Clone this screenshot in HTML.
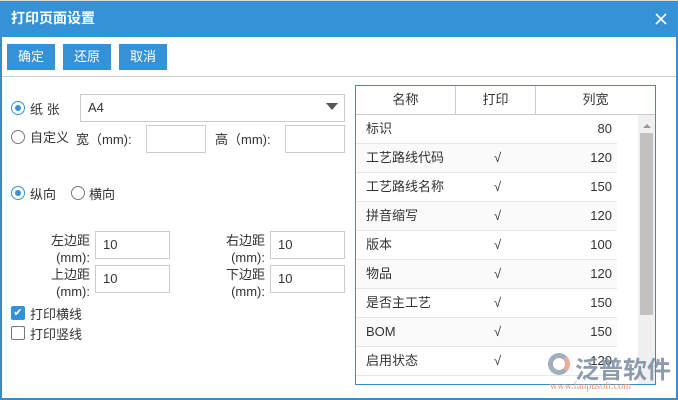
<!DOCTYPE html>
<html><head><meta charset="utf-8"><style>
*{margin:0;padding:0;box-sizing:border-box}
body{width:678px;height:400px;overflow:hidden;background:#fff;font-family:"Liberation Sans","Noto Sans CJK SC",sans-serif;font-size:13px;color:#333;position:relative}
.frame{position:absolute;left:0;top:1px;width:678px;height:399px;border:2px solid #3a8bc8;border-top:none}
.title{position:absolute;left:0;top:1px;width:678px;height:36px;background:#3592d6;color:#fff;font-weight:bold;font-size:14px;line-height:34px;padding-left:11px}
.btn{position:absolute;top:44px;width:48px;height:26px;background:#3592d6;color:#fff;font-size:13px;text-align:center;line-height:26px}
.sep{position:absolute;left:2px;right:2px;top:76px;border-top:1px solid #ccc}
.a{position:absolute;white-space:nowrap}
.radio{position:absolute;width:14px;height:14px;border:1px solid #777;border-radius:50%}
.radio.on{border-color:#3592d6}
.radio.on::after{content:"";position:absolute;left:3px;top:3px;width:6px;height:6px;border-radius:50%;background:#3592d6}
.inp{position:absolute;border:1px solid #ccc;background:#fff;padding-left:7px;line-height:26px}
.lbl{position:absolute;text-align:right;line-height:17px;font-size:13px}
.tbl{position:absolute;left:355px;top:85px;width:301px;height:300px;border:1px solid #3a8bc8;overflow:hidden}
.hdr{position:absolute;left:0;top:0;height:29px;width:299px;border-bottom:1px solid #ccc}
.hdr div{position:absolute;top:0;height:28px;line-height:28px;text-align:center;border-right:1px solid #ccc}
.row{position:absolute;left:0;width:261px;height:29px;border-bottom:1px solid #e6e6e6;line-height:28px}
.row span{position:absolute}
</style></head><body>
<div style="position:absolute;left:0;top:0;width:678px;height:2px;background:#ddd"></div>
<div class="frame"></div>
<div class="title">打印页面设置</div>
<svg style="position:absolute;left:655px;top:13px" width="12" height="12" viewBox="0 0 12 12"><path d="M1 1L11 11M11 1L1 11" stroke="#fff" stroke-width="1.6"/></svg>
<div class="btn" style="left:7px">确定</div>
<div class="btn" style="left:63px">还原</div>
<div class="btn" style="left:119px">取消</div>
<div class="sep"></div>

<div class="radio on" style="left:11px;top:101px"></div>
<div class="a" style="left:30px;top:99px">纸 张</div>
<div class="inp" style="left:80px;top:94px;width:265px;height:28px">A4</div>
<div class="a" style="left:326px;top:103px;width:0;height:0;border-left:6px solid transparent;border-right:6px solid transparent;border-top:7px solid #555"></div>
<div class="radio" style="left:11px;top:130px"></div>
<div class="a" style="left:30px;top:127px">自定义</div>
<div class="a" style="left:76px;top:129px">宽（mm):</div>
<div class="inp" style="left:146px;top:125px;width:60px;height:28px"></div>
<div class="a" style="left:215px;top:129px">高（mm):</div>
<div class="inp" style="left:285px;top:125px;width:60px;height:28px"></div>

<div class="radio on" style="left:11px;top:186px"></div>
<div class="a" style="left:30px;top:184px">纵向</div>
<div class="radio" style="left:71px;top:186px"></div>
<div class="a" style="left:89px;top:184px">横向</div>

<div class="lbl" style="left:30px;top:232px;width:60px">左边距<br>(mm):</div>
<div class="inp" style="left:95px;top:231px;width:75px;height:28px">10</div>
<div class="lbl" style="left:205px;top:232px;width:60px">右边距<br>(mm):</div>
<div class="inp" style="left:270px;top:231px;width:75px;height:28px">10</div>
<div class="lbl" style="left:30px;top:266px;width:60px">上边距<br>(mm):</div>
<div class="inp" style="left:95px;top:265px;width:75px;height:28px">10</div>
<div class="lbl" style="left:205px;top:266px;width:60px">下边距<br>(mm):</div>
<div class="inp" style="left:270px;top:265px;width:75px;height:28px">10</div>

<div class="a" style="left:11px;top:306px;width:14px;height:14px;background:#3592d6;border-radius:2px;color:#fff;font-size:11px;line-height:14px;text-align:center">✔</div>
<div class="a" style="left:30px;top:304px">打印横线</div>
<div class="a" style="left:11px;top:326px;width:14px;height:14px;border:1px solid #777;border-radius:2px"></div>
<div class="a" style="left:30px;top:324px">打印竖线</div>

<div class="tbl">
<div class="hdr"><div style="left:0;width:100px">名称</div><div style="left:100px;width:80px">打印</div><div style="left:180px;width:119px;border-right:none">列宽</div></div>
<div class="row" style="top:29px"><span style="left:10px">标识</span><span style="right:5px">80</span></div>
<div class="row" style="top:58px;background:#fafafa"><span style="left:10px">工艺路线代码</span><span style="left:138px">√</span><span style="right:5px">120</span></div>
<div class="row" style="top:87px"><span style="left:10px">工艺路线名称</span><span style="left:138px">√</span><span style="right:5px">150</span></div>
<div class="row" style="top:116px;background:#fafafa"><span style="left:10px">拼音缩写</span><span style="left:138px">√</span><span style="right:5px">120</span></div>
<div class="row" style="top:145px"><span style="left:10px">版本</span><span style="left:138px">√</span><span style="right:5px">100</span></div>
<div class="row" style="top:174px;background:#fafafa"><span style="left:10px">物品</span><span style="left:138px">√</span><span style="right:5px">120</span></div>
<div class="row" style="top:203px"><span style="left:10px">是否主工艺</span><span style="left:138px">√</span><span style="right:5px">150</span></div>
<div class="row" style="top:232px;background:#fafafa"><span style="left:10px">BOM</span><span style="left:138px">√</span><span style="right:5px">150</span></div>
<div class="row" style="top:261px"><span style="left:10px">启用状态</span><span style="left:138px">√</span><span style="right:5px">120</span></div>
<div style="position:absolute;left:282px;top:29px;width:17px;height:271px;background:#f0f0f0"></div>
<div style="position:absolute;left:284px;top:47px;width:13px;height:182px;background:#c1c1c1"></div>
<div style="position:absolute;left:287px;top:38px;width:0;height:0;border-left:4px solid transparent;border-right:4px solid transparent;border-bottom:4px solid #999"></div>
</div>
<div class="a" style="left:575px;top:350px;font-size:24px;font-weight:bold;color:#7a8aa0;opacity:.85">泛普软件</div>
<div class="a" style="left:548px;top:353px;width:22px;height:22px;border-radius:50%;border:5px solid #8c9bb0;border-right-color:#e39a7c;opacity:.8"></div>
<div class="a" style="left:550px;top:381px;font-size:10px;color:#e39a7c;font-family:'Liberation Serif',serif">www.fanpusoft.com</div>
</body></html>
